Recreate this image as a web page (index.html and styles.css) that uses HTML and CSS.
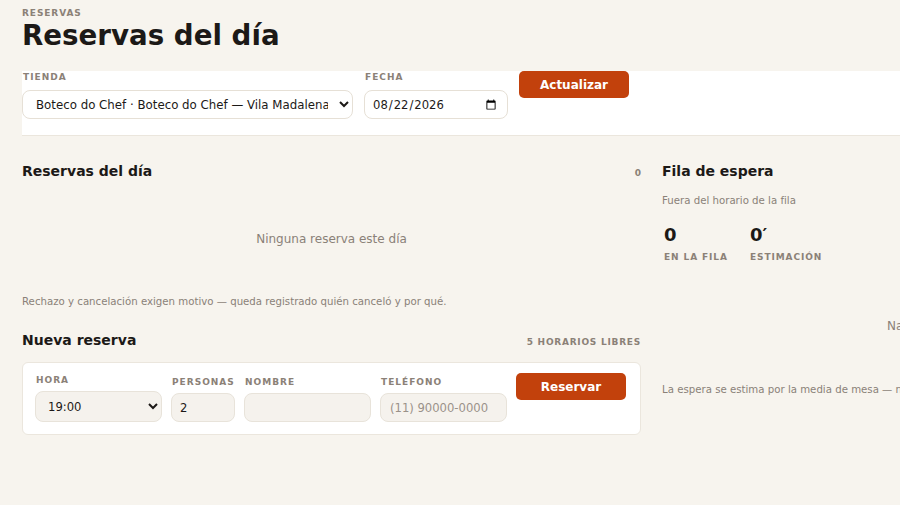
FILE: index.html
```html
<!DOCTYPE html>
<html lang="es">
<head>
<meta charset="utf-8">
<title>Reservas del día</title>
<link rel="stylesheet" href="styles.css">
</head>
<body>
<div class="page">
  <div class="eyebrow">RESERVAS</div>
  <h1 class="title">Reservas del día</h1>

  <form class="filters">
    <div class="field">
      <label class="label">TIENDA</label>
      <select class="control store">
        <option>Boteco do Chef · Boteco do Chef — Vila Madalena</option>
      </select>
    </div>
    <div class="field">
      <label class="label">FECHA</label>
      <input class="control date" type="date" value="2026-08-22">
    </div>
    <button type="button" class="btn btn-update">Actualizar</button>
  </form>

  <div class="columns">
    <section class="col-left">
      <div class="sec-head">
        <h2 class="sec-title">Reservas del día</h2>
        <span class="count">0</span>
      </div>
      <p class="empty">Ninguna reserva este día</p>
      <p class="note">Rechazo y cancelación exigen motivo — queda registrado quién canceló y por qué.</p>

      <div class="sec-head new-head">
        <h2 class="sec-title">Nueva reserva</h2>
        <span class="meta">5 HORARIOS LIBRES</span>
      </div>
      <form class="card new-form">
        <div class="field">
          <label class="label">HORA</label>
          <select class="control soft hour">
            <option>19:00</option>
          </select>
        </div>
        <div class="field">
          <label class="label">PERSONAS</label>
          <input class="control soft people" type="text" value="2">
        </div>
        <div class="field">
          <label class="label">NOMBRE</label>
          <input class="control soft name" type="text">
        </div>
        <div class="field">
          <label class="label">TELÉFONO</label>
          <input class="control soft phone" type="text" placeholder="(11) 90000-0000">
        </div>
        <button type="button" class="btn btn-book">Reservar</button>
      </form>
    </section>

    <section class="col-right">
      <div class="sec-head">
        <h2 class="sec-title">Fila de espera</h2>
      </div>
      <p class="sub">Fuera del horario de la fila</p>
      <div class="stats">
        <div class="stat stat-first">
          <div class="stat-num">0</div>
          <div class="stat-label">EN LA FILA</div>
        </div>
        <div class="stat">
          <div class="stat-num">0′</div>
          <div class="stat-label">ESTIMACIÓN</div>
        </div>
      </div>
      <p class="empty queue-empty">Nadie en la fila</p>
      <p class="note queue-note">La espera se estima por la media de mesa — no es un compromiso con el cliente.</p>
    </section>
  </div>
</div>
</body>
</html>
```
FILE: styles.css
```css
html, body {
  margin: 0;
  padding: 0;
  overflow: hidden;
  background: #f7f4ee;
}
body {
  font-family: "DejaVu Sans", sans-serif;
  color: #1c1917;
}
.page {
  width: 1180px;
  padding: 7px 0 0 22px;
}
.eyebrow {
  font-size: 9px;
  line-height: 13px;
  font-weight: bold;
  letter-spacing: 0.9px;
  color: #8b8177;
}
.title {
  margin: 0;
  font-size: 27.7px;
  line-height: 32px;
  font-weight: bold;
  color: #1c1917;
}
.filters {
  margin: 19px 0 0;
  display: flex;
  align-items: flex-start;
  gap: 11px;
  background: #ffffff;
  border-bottom: 1px solid #ebe6dd;
  padding: 0 0 16px 0;
}
.field {
  display: flex;
  flex-direction: column;
}
.label {
  font-size: 9px;
  line-height: 13px;
  font-weight: bold;
  letter-spacing: 1px;
  color: #8b8177;
  margin-bottom: 6px;
  padding-left: 1px;
  white-space: nowrap;
}
.control {
  box-sizing: border-box;
  font-family: "DejaVu Sans", sans-serif;
  font-size: 11.6px;
  color: #1c1917;
  background: #ffffff;
  border: 1px solid #e6e0d6;
  border-radius: 8px;
  height: 29px;
  padding: 0 8px 0 9px;
  outline: none;
}
.store { width: 331px; font-size: 11.8px; }
.date { width: 144px; padding-left: 7px; }
.btn {
  border: none;
  border-radius: 5px;
  background: #c2410c;
  color: #ffffff;
  font-family: "DejaVu Sans", sans-serif;
  font-weight: bold;
  font-size: 12px;
  width: 110px;
  height: 27px;
  padding: 0;
}
.columns {
  display: flex;
  gap: 21px;
  margin-top: 25px;
  align-items: flex-start;
}
.col-left { width: 619px; }
.col-right { width: 540px; }
.sec-head {
  display: flex;
  justify-content: space-between;
  align-items: center;
  height: 21px;
}
.sec-title {
  margin: 0;
  font-size: 14px;
  line-height: 21px;
  font-weight: bold;
}
.count {
  font-size: 9px;
  font-weight: bold;
  color: #8b8177;
  padding-right: 0;
  margin-top: 3px;
}
.meta {
  font-size: 9px;
  font-weight: bold;
  letter-spacing: 0.75px;
  color: #8b8177;
  margin-top: 3px;
}
.empty {
  margin: 49px 0 0;
  text-align: center;
  font-size: 12px;
  line-height: 16px;
  color: #8a8178;
}
.note {
  margin: 48px 0 0;
  font-size: 10.2px;
  line-height: 14px;
  color: #8a8178;
}
.new-head { margin-top: 21px; }
.card {
  margin-top: 11px;
  background: #ffffff;
  border: 1px solid #ebe6dd;
  border-radius: 6px;
}
.new-form {
  display: flex;
  align-items: flex-end;
  gap: 9px;
  padding: 11px 12px 12px 12px;
}
.new-form .label { margin-bottom: 4px; }
.soft {
  background: #f5f2ed;
  border-color: #e8e3da;
}
.hour { width: 127px; height: 31px; padding-left: 8px; }
.people { width: 64px; padding-left: 8px; }
.name { width: 127px; }
.phone { width: 127px; padding-left: 9px; }
.phone::placeholder { color: #9a9189; }
.btn-book { align-self: flex-start; margin-top: -1px; }
.sub {
  margin: 12px 0 0;
  font-size: 10.2px;
  line-height: 14px;
  color: #8a8178;
}
.stats {
  display: flex;
  gap: 24px;
  margin-top: 16px;
  padding-left: 2px;
}
.stat-first { width: 62px; }
.stat-num {
  font-size: 18px;
  line-height: 22px;
  font-weight: bold;
}
.stat-label {
  margin-top: 5px;
  font-size: 9px;
  line-height: 12px;
  font-weight: bold;
  letter-spacing: 0.9px;
  color: #8b8177;
  white-space: nowrap;
}
.queue-empty { margin-top: 55px; }
.queue-note { margin-top: 49px; }
```
